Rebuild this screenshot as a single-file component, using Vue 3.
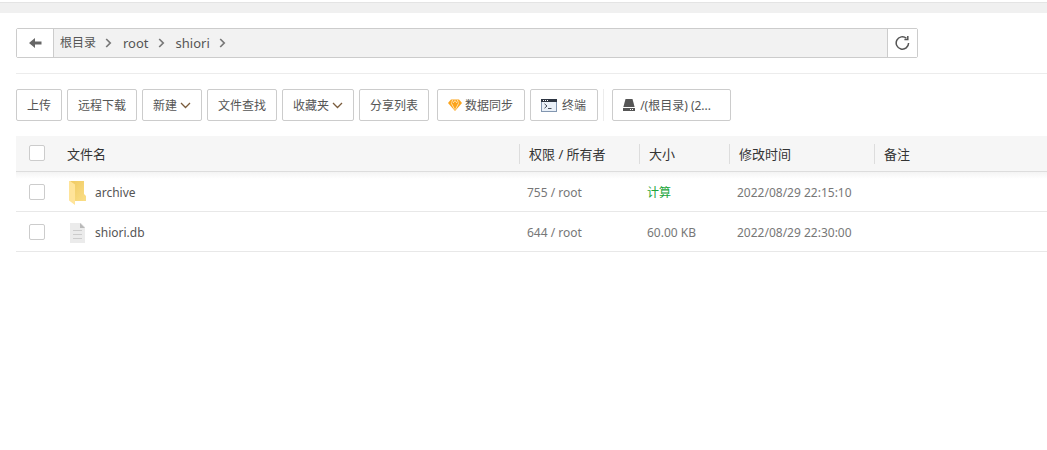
<template>
  <div class="file-page">
    <div class="top-strip"></div>

    <nav class="path-bar" aria-label="路径">
      <button type="button" class="path-btn back" aria-label="返回">
        <svg width="13" height="10" viewBox="0 0 13 10">
          <path d="M0 5 L6 0 V3.4 H12.5 V6.6 H6 V10 Z" fill="#666" />
        </svg>
      </button>
      <div class="crumbs">
        <span v-for="item in paths" :key="item" class="crumb">
          <a href="#" @click.prevent>{{ item }}</a>
          <svg width="7" height="10" viewBox="0 0 7 10">
            <path d="M1.2 1 L5.2 5 L1.2 9" fill="none" stroke="#777" stroke-width="1.7" />
          </svg>
        </span>
      </div>
      <button type="button" class="path-btn refresh" aria-label="刷新">
        <svg width="16" height="16" viewBox="0 0 16 16" fill="none" stroke="#555" stroke-width="1.5">
          <path d="M13.6 8 A6.2 6.2 0 1 1 11.4 3.2" />
          <path d="M12.8 1 V4.4 H9.4" />
        </svg>
      </button>
    </nav>

    <div class="toolbar">
      <button type="button" class="btn">上传</button>
      <button type="button" class="btn">远程下载</button>
      <button type="button" class="btn">
        新建
        <svg class="caret" width="11" height="7" viewBox="0 0 11 7">
          <path d="M1 1 L5.5 5.5 L10 1" />
        </svg>
      </button>
      <button type="button" class="btn">文件查找</button>
      <button type="button" class="btn">
        收藏夹
        <svg class="caret" width="11" height="7" viewBox="0 0 11 7">
          <path d="M1 1 L5.5 5.5 L10 1" />
        </svg>
      </button>
      <button type="button" class="btn">分享列表</button>
      <div class="plugin-group">
        <button type="button" class="btn">
          <svg class="gem" width="14" height="12" viewBox="0 0 14 12">
            <path d="M3 0.5 H11 L14 4 L7 12 L0 4 Z" fill="#fca41b" />
            <path d="M3.4 4.2 L6.6 10.5 M10.6 4.2 L7.4 10.5 M4.6 1 L3.6 3.6 M9.4 1 L10.4 3.6 M5 4 L7 1.6 L9 4" fill="none" stroke="#fff0cf" stroke-width="0.8" />
          </svg>
          数据同步
        </button>
        <button type="button" class="btn">
          <svg class="term" width="16" height="13" viewBox="0 0 16 13">
            <rect x="0.5" y="0.5" width="15" height="12" fill="#e9f0f8" stroke="#8296b0" />
            <rect width="16" height="3" fill="#2d3542" />
            <path d="M2 1.5 H3 M4 1.5 H5 M6 1.5 H7" stroke="#fff" />
            <path d="M3.5 4.8 L6 7 L3.5 9.2 M7 9.5 H10.5" fill="none" stroke="#333b48" stroke-width="0.9" />
          </svg>
          终端
        </button>
      </div>
      <div class="disk-group">
        <button type="button" class="btn disk">
          <svg class="drive" width="12" height="12" viewBox="0 0 12 12" fill="#555">
            <path d="M2.5 0 H9.5 L11.6 8 H0.4 Z" />
            <path d="M0 9 H12 V12 H0 Z" />
            <path d="M7 10.5 H8 M9 10.5 H10" stroke="#fff" />
          </svg>
          /(根目录) (2...
        </button>
      </div>
    </div>

    <table class="file-table">
      <colgroup>
        <col class="col-check" />
        <col />
        <col class="col-auth" />
        <col class="col-size" />
        <col class="col-time" />
        <col class="col-note" />
      </colgroup>
      <thead>
        <tr>
          <th><input type="checkbox" aria-label="全选" /></th>
          <th class="name-head">文件名</th>
          <th v-for="title in titles" :key="title"><span class="split">{{ title }}</span></th>
        </tr>
      </thead>
      <tbody>
        <tr v-for="file in files" :key="file.name">
          <td><input type="checkbox" :aria-label="file.name" /></td>
          <td>
            <a href="#" class="file-name" @click.prevent>
              <svg v-if="file.dir" width="17" height="24" viewBox="0 0 17 24">
                <defs>
                  <linearGradient id="folder" x1="0" x2="1" y1="0" y2="1">
                    <stop offset="0" stop-color="#f0ca62" />
                    <stop offset="1" stop-color="#fade87" />
                  </linearGradient>
                </defs>
                <path d="M1 0 H15 V13 L17 15 V20 H5 Z" fill="url(#folder)" />
                <path d="M0 0 H1 L6 3.5 V24 L0 19.5 Z" fill="#ffe49a" />
              </svg>
              <svg v-else width="17" height="20" viewBox="0 0 17 20">
                <path d="M1 0 H12 L16 4 V20 H1 Z" fill="#ebebeb" />
                <path d="M11 0 L16 5 H11 Z" fill="#b9b9b9" />
                <path d="M4 7.5 H13 M4 11.5 H13 M4 15.5 H13" stroke="#ccc" />
              </svg>
              {{ file.name }}
            </a>
          </td>
          <td>{{ file.auth }}</td>
          <td>
            <a v-if="file.dir" href="#" class="calc" @click.prevent>计算</a>
            <template v-else>{{ file.size }}</template>
          </td>
          <td>{{ file.time }}</td>
          <td></td>
        </tr>
      </tbody>
    </table>
  </div>
</template>

<script setup>
const paths = ['根目录', 'root', 'shiori']

const titles = ['权限 / 所有者', '大小', '修改时间', '备注']

const files = [
  { name: 'archive', dir: true, auth: '755 / root', time: '2022/08/29 22:15:10' },
  { name: 'shiori.db', dir: false, auth: '644 / root', size: '60.00 KB', time: '2022/08/29 22:30:00' }
]
</script>

<style>
body {
  background: #fff;
}
</style>

<style scoped>
.file-page {
  font-family: "Noto Sans", "Noto Sans CJK SC", sans-serif;
  font-size: 12px;
  line-height: 18px;
  color: #555;
}
.file-page * {
  box-sizing: border-box;
}
.top-strip {
  height: 11px;
  margin-top: 2px;
  border-top: 1px solid #e4e4e4;
  background: #f0f0f0;
}
a {
  color: inherit;
  text-decoration: none;
}
button {
  font: inherit;
  color: inherit;
  background: #fff;
  cursor: pointer;
}
.path-bar {
  display: flex;
  height: 30px;
  margin: 15px 129px 0 16px;
  border: 1px solid #ccc;
  border-radius: 2px;
  background: #f2f2f2;
}
.path-btn {
  display: flex;
  align-items: center;
  justify-content: center;
  padding: 0;
  border: 0;
}
.back {
  width: 37px;
  border-right: 1px solid #ccc;
}
.refresh {
  width: 30px;
  border-left: 1px solid #ccc;
}
.crumbs {
  display: flex;
  flex: 1;
  align-items: center;
  gap: 11px;
  padding-left: 6px;
}
.crumb {
  display: flex;
  align-items: center;
  gap: 9px;
}
.crumb + .crumb {
  font-size: 13px;
}
.toolbar {
  display: flex;
  gap: 5px;
  margin: 15px 0 0 16px;
  padding-top: 15px;
  border-top: 1px solid #ececec;
}
.btn {
  display: flex;
  align-items: center;
  height: 32px;
  padding: 2px 10px 0;
  border: 1px solid #ccc;
  border-radius: 2px;
  white-space: nowrap;
}
.btn svg {
  margin-bottom: 2px;
}
.caret {
  margin-left: 3px;
  fill: none;
  stroke: #7a5c3c;
  stroke-width: 1.3;
}
.gem {
  margin-right: 3px;
}
.term {
  margin-right: 5px;
}
.drive {
  margin-right: 5px;
}
.plugin-group {
  display: flex;
  gap: 5px;
  margin-left: 3px;
}
.plugin-group .btn {
  padding-right: 11px;
}
.disk-group {
  padding-left: 8px;
  border-left: 1px solid #ececec;
}
.disk {
  width: 119px;
}
.file-table {
  width: calc(100% - 16px);
  margin: 15px 0 0 16px;
  border-collapse: separate;
  border-spacing: 0;
  table-layout: fixed;
}
.col-check {
  width: 43px;
}
.col-auth {
  width: 120px;
}
.col-size {
  width: 90px;
}
.col-time {
  width: 145px;
}
.col-note {
  width: 173px;
}
th {
  height: 36px;
  padding: 0;
  border-bottom: 1px solid #ddd;
  background: #f6f6f6;
  color: #333;
  font-size: 13px;
  font-weight: normal;
  text-align: left;
}
tbody tr:first-child td {
  background: linear-gradient(#f4f4f4, #fff 7px);
}
.name-head {
  padding-left: 8px;
}
.split {
  display: block;
  padding-left: 9px;
  border-left: 1px solid #ddd;
  line-height: 20px;
}
td {
  height: 40px;
  padding: 2px 8px 0;
  border-bottom: 1px solid #e8e8e8;
  color: #777;
}
td:first-child {
  padding: 0 0 0 13px;
}
th:first-child {
  padding: 0 0 2px 13px;
}
input {
  display: block;
  width: 16px;
  height: 16px;
  margin: 0;
  appearance: none;
  border: 1px solid #ccc;
  border-radius: 2px;
  background: #fff;
}
.file-name {
  display: flex;
  align-items: center;
  gap: 9px;
  padding-left: 2px;
  color: #555;
}
.calc {
  color: #20a53a;
}
</style>
